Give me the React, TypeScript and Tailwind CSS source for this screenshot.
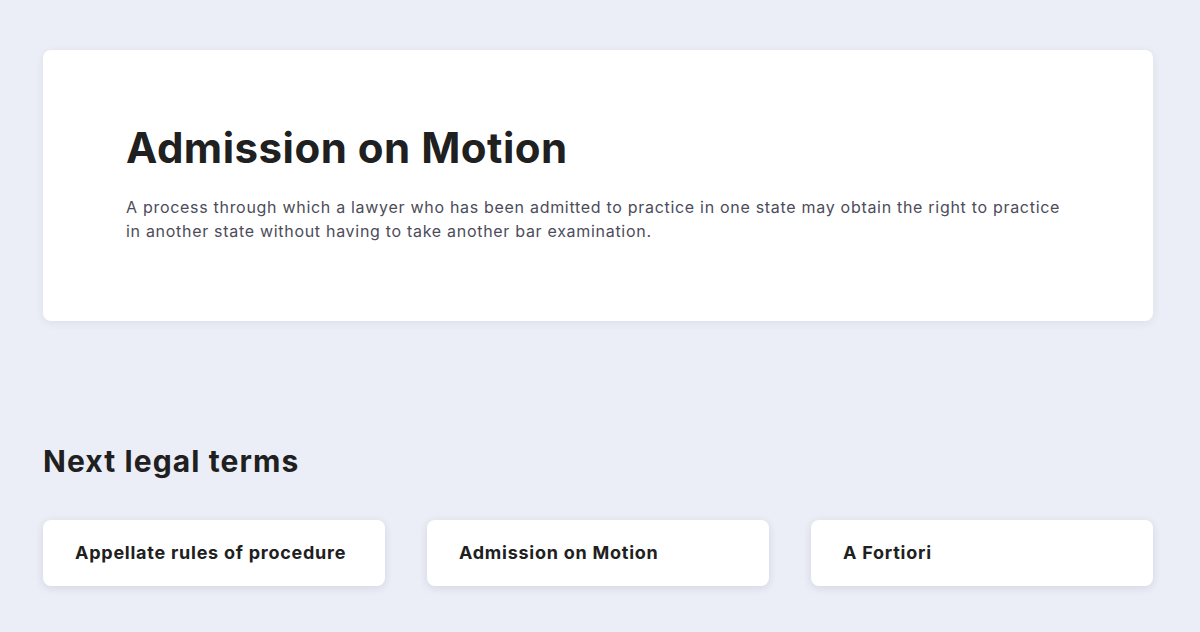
import React from "react";

const terms = ["Appellate rules of procedure", "Admission on Motion", "A Fortiori"];

export default function App() {
  return (
    <div className="min-h-[632px] w-full bg-[#ebeef6] font-['Inter',sans-serif] text-[#212121]">
      <div className="ml-[43px] w-[1110px] pt-[50px] pb-10">
        <section className="rounded-lg bg-white px-[83px] pt-[73px] pb-[78px] shadow-[0_2px_10px_rgba(30,40,80,0.07)]">
          <h1 className="text-[42px] leading-[50px] font-bold tracking-[0.5px] text-[#202020]">
            Admission on Motion
          </h1>
          <p className="mt-[22px] text-[16px] leading-[24px] tracking-[0.7px] text-[#4c4c5a]">
            A process through which a lawyer who has been admitted to practice in one state may obtain the right to
            practice in another state without having to take another bar examination.
          </p>
        </section>

        <h2 className="mt-[122px] text-[30px] leading-[36px] font-bold tracking-[1.1px] text-[#202020]">
          Next legal terms
        </h2>

        <div className="mt-[41px] grid grid-cols-3 gap-[42px]">
          {terms.map((t) => (
            <div
              key={t}
              className="flex h-[66px] items-center rounded-lg bg-white px-8 shadow-[0_2px_8px_rgba(30,40,80,0.12)]"
            >
              <span className="text-[18px] leading-[24px] font-bold tracking-[0.75px] text-[#202020]">{t}</span>
            </div>
          ))}
        </div>
      </div>
    </div>
  );
}
